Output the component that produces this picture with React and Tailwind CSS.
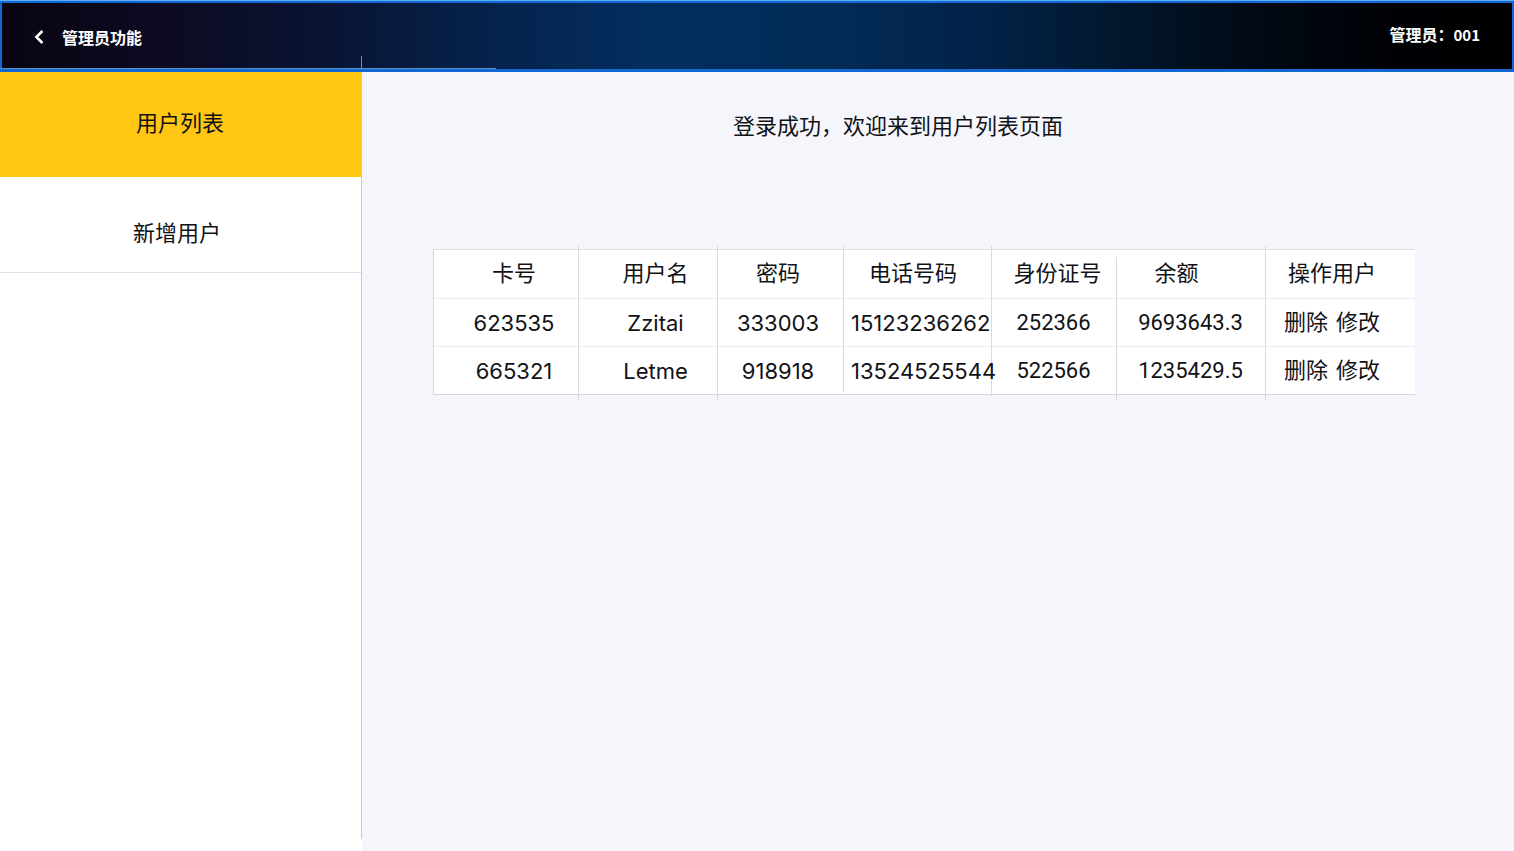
import React from "react";

const columns = [
  { label: "卡号", width: "w-[144px]", pad: "pl-4", line: "" },
  { label: "用户名", width: "w-[139px]", pad: "pl-4", line: "before:-top-1 before:h-[154px]" },
  { label: "密码", width: "w-[126px]", pad: "pr-1", line: "before:-top-1 before:h-[154px]" },
  { label: "电话号码", width: "w-[148px]", pad: "pr-2", line: "before:-top-1 before:h-[146px]" },
  { label: "身份证号", width: "w-[125px]", pad: "pl-2", line: "before:-top-1 before:h-[150px]" },
  { label: "余额", width: "w-[149px]", pad: "pr-7", line: "before:top-[7px] before:h-[143px]" },
  { label: "操作用户", width: "w-[150px]", pad: "pr-4", line: "before:-top-1 before:h-[154px]" },
];

const users = [
  { card: "623535", name: "Zzitai", password: "333003", phone: "15123236262", idNo: "252366", balance: "9693643.3" },
  { card: "665321", name: "Letme", password: "918918", phone: "13524525544", idNo: "522566", balance: "1235429.5" },
];

function Header() {
  return (
    <header className="relative flex h-[72px] items-center justify-between border-x-2 border-y-3 border-[#1268d3] bg-[linear-gradient(90deg,#080411_0%,#0d0a22_10%,#0a1230_20%,#06224b_32%,#032d5e_42%,#022c57_54%,#02234a_64%,#021a33_72%,#010b16_82%,#000105_92%,#000_100%)] pr-8 pl-7 text-base font-bold text-white">
      <div className="flex items-center gap-3 pt-0.5">
        <button type="button" aria-label="返回" className="flex h-5 w-5 items-center justify-center">
          <svg viewBox="0 0 20 20" className="h-5 w-5" fill="none" stroke="currentColor" strokeWidth="2.6">
            <path d="M12.4 4 L6.4 10 L12.4 16" />
          </svg>
        </button>
        <h1>管理员功能</h1>
      </div>
      <p className="pb-1">
        管理员：<span className="text-[15px]">001</span>
      </p>
      <span className="absolute -inset-x-0.5 -top-[3px] h-px bg-[#5cb0f5]" />
      <span className="absolute bottom-0 -left-0.5 h-px w-[496px] bg-[#5f93c9]" />
      <span className="absolute bottom-0 left-[359px] h-[13px] w-px bg-[#7d88a5]" />
    </header>
  );
}

function Sidebar() {
  return (
    <nav className="relative w-[362px] shrink-0 bg-white text-[22px] leading-8">
      <a href="#list" aria-current="page" className="flex h-[105px] items-center justify-center bg-[#ffc714] pr-0.5 pb-2">
        用户列表
      </a>
      <a href="#new" className="flex h-24 items-center justify-center border-b border-[#dedfe3] pt-3 pr-2">
        新增用户
      </a>
      <span className="absolute top-0 right-0 bottom-3 w-px bg-[#c9cad2]" />
    </nav>
  );
}

function UserTable() {
  return (
    <table className="w-full table-fixed border-separate border-spacing-0 border-b border-l border-[#d5d7dd] bg-white text-center whitespace-nowrap">
      <thead>
        <tr className="h-[49px]">
          {columns.map((c) => (
            <th
              key={c.label}
              scope="col"
              className={`relative border-t border-[#dfe0e6] p-0 font-normal ${c.width} ${
                c.line && `before:absolute before:left-0 before:w-px before:bg-[#d9dae0] ${c.line}`
              }`}
            >
              <div className={`pb-1.5 ${c.pad}`}>{c.label}</div>
            </th>
          ))}
        </tr>
      </thead>
      <tbody>
        {users.map((u) => (
          <tr key={u.card} className="h-12 *:border-t *:border-[#ebecef] *:p-0">
            <td><div className="pl-4 font-[Inter]">{u.card}</div></td>
            <td><div className="pl-4 font-[Inter]">{u.name}</div></td>
            <td><div className="pr-1 font-[Inter]">{u.password}</div></td>
            <td><div className="relative z-10 pl-2 text-left font-[Inter]">{u.phone}</div></td>
            <td><div className="font-[Roboto]">{u.idNo}</div></td>
            <td><div className="font-[Roboto]">{u.balance}</div></td>
            <td>
              <div className="flex justify-center gap-2 pr-4 pb-1.5">
                <button type="button">删除</button>
                <button type="button">修改</button>
              </div>
            </td>
          </tr>
        ))}
      </tbody>
    </table>
  );
}

export default function App() {
  return (
    <div className="flex min-h-screen flex-col bg-[#f5f6fb] font-['Noto_Sans_CJK_SC',sans-serif] text-[#111216]">
      <Header />
      <div className="flex flex-1">
        <Sidebar />
        <main className="min-w-0 flex-1 pt-9 text-[22px] leading-8">
          <h2 className="pr-20 text-center">登录成功，欢迎来到用户列表页面</h2>
          <div className="mt-[109px] mr-[100px] ml-[71px]">
            <UserTable />
          </div>
        </main>
      </div>
    </div>
  );
}
